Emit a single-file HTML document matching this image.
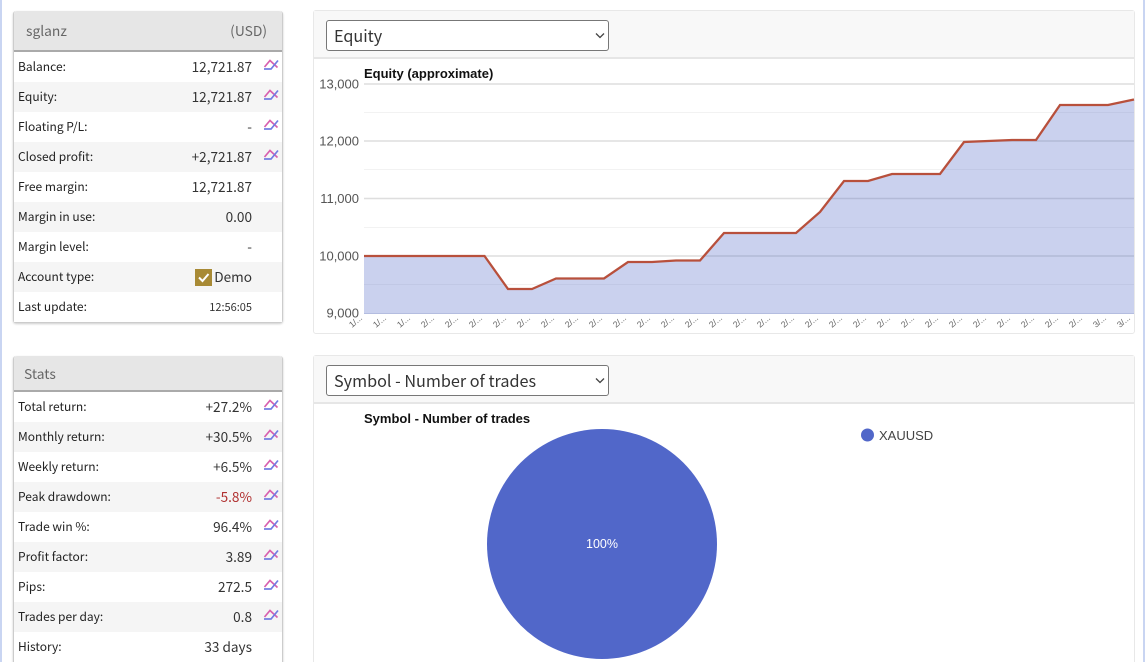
<!DOCTYPE html>
<html><head><meta charset="utf-8"><style>
*{box-sizing:border-box}
html,body{margin:0;padding:0;background:#fff;width:1146px;height:662px;overflow:hidden}
#w{position:absolute;left:0;top:0;width:1146px;height:662px;overflow:hidden;font-family:"Noto Sans CJK JP","Liberation Sans",sans-serif;color:#333;filter:blur(.3px)}
.abs{position:absolute}
.box{position:absolute;left:13px;width:270px;background:#fff;border:1px solid #ccc;border-top:0;border-radius:3px;box-shadow:0 1px 2px rgba(0,0,0,.2)}
.hd{height:41px;background:#e6e6e6;border-bottom:2px solid #aaa;border-radius:3px 3px 0 0;color:#666;font-size:13.8px;line-height:38px;padding:0 15px 0 12px;display:flex;justify-content:space-between}
.r{position:relative;height:30px;line-height:29px;font-size:12px;color:#222;padding-left:4px}
.r b{position:absolute;right:30px;top:0;font-weight:400;font-size:13.6px;color:#333}
.r svg{position:absolute;left:249px;top:6px}
.panel{position:absolute;left:313px;width:822px;border:1px solid #e8e8e8;background:#fff;border-radius:3px}
.ph{height:48px;background:#f8f8f8;border-bottom:2px solid #e6e6e6}
.sel{position:absolute;left:12px;top:9px;width:283px;height:31px;font-size:16.2px;line-height:28px;color:#333;background:#fff;border:1px solid #777;border-radius:3px;padding-left:7px}
.sel svg{position:absolute;right:3px;top:11px}
</style></head><body>
<div id="w">
<svg width="0" height="0" style="position:absolute"><defs><g id="ic" fill="none" stroke-width="1.700"><path d="M1.500 9L7 2.500L14.500 9.500" stroke="#d860ae"/><path d="M1 11H8L15 2.500" stroke="#727de2"/></g></defs></svg>
<div class="abs" style="left:0;top:0;width:2px;height:662px;background:#c9d5f2"></div>
<div class="abs" style="left:1143px;top:0;width:2px;height:662px;background:#c9d5f2"></div>

<div class="box" style="top:11px;height:312px">
<div class="hd"><span>sglanz</span><span>(USD)</span></div>
<div>
<div class="r" style="background:#fff">Balance:<b>12,721.87</b><svg width="17" height="14"><use href="#ic"/></svg></div>
<div class="r" style="background:#f5f5f5">Equity:<b>12,721.87</b><svg width="17" height="14"><use href="#ic"/></svg></div>
<div class="r" style="background:#fff">Floating P/L:<b>-</b><svg width="17" height="14"><use href="#ic"/></svg></div>
<div class="r" style="background:#f5f5f5">Closed profit:<b>+2,721.87</b><svg width="17" height="14"><use href="#ic"/></svg></div>
<div class="r" style="background:#fff">Free margin:<b>12,721.87</b></div>
<div class="r" style="background:#f5f5f5">Margin in use:<b>0.00</b></div>
<div class="r" style="background:#fff">Margin level:<b>-</b></div>
<div class="r" style="background:#f5f5f5">Account type:<b><span style="display:inline-block;width:17px;height:17px;background:#a88a35;vertical-align:-4px;margin-right:2px;position:relative"><svg width="17" height="17" style="left:0;top:0"><path d="M4 8.500L7.500 12L13.500 5" fill="none" stroke="#fff" stroke-width="2"/></svg></span>Demo</b></div>
<div class="r" style="background:#fff">Last update:<b style="font-size:11px;line-height:30px">12:56:05</b></div>
</div></div>

<div class="box" style="top:356px;height:320px">
<div class="hd" style="height:36px;line-height:34px;padding-left:10px"><span>Stats</span></div>
<div>
<div class="r" style="background:#fff">Total return:<b>+27.2%</b><svg width="17" height="14"><use href="#ic"/></svg></div>
<div class="r" style="background:#f5f5f5">Monthly return:<b>+30.5%</b><svg width="17" height="14"><use href="#ic"/></svg></div>
<div class="r" style="background:#fff">Weekly return:<b>+6.5%</b><svg width="17" height="14"><use href="#ic"/></svg></div>
<div class="r" style="background:#f5f5f5">Peak drawdown:<b style="color:#b03030">-5.8%</b><svg width="17" height="14"><use href="#ic"/></svg></div>
<div class="r" style="background:#fff">Trade win %:<b>96.4%</b><svg width="17" height="14"><use href="#ic"/></svg></div>
<div class="r" style="background:#f5f5f5">Profit factor:<b>3.89</b><svg width="17" height="14"><use href="#ic"/></svg></div>
<div class="r" style="background:#fff">Pips:<b>272.5</b><svg width="17" height="14"><use href="#ic"/></svg></div>
<div class="r" style="background:#f5f5f5">Trades per day:<b>0.8</b><svg width="17" height="14"><use href="#ic"/></svg></div>
<div class="r" style="background:#fff">History:<b>33 days</b></div>
</div></div>

<div class="panel" style="top:10px;height:324px"><div class="ph"><div class="sel">Equity<svg width="10" height="8"><path d="M1 1.500L5 5.500L9 1.500" fill="none" stroke="#444" stroke-width="1.300"/></svg></div></div></div>
<div class="panel" style="top:355px;height:320px"><div class="ph"><div class="sel">Symbol - Number of trades<svg width="10" height="8"><path d="M1 1.500L5 5.500L9 1.500" fill="none" stroke="#444" stroke-width="1.300"/></svg></div></div></div>

<svg class="abs" style="left:0;top:0" width="1146" height="662" font-family="Liberation Sans, Arial, sans-serif">
<g stroke="#f2f2f2" stroke-width="1"><path d="M364 112.500H1134M364 169.500H1134M364 227.500H1134M364 284.500H1134"/></g>
<g stroke="#dedede" stroke-width="1.500"><path d="M364 84H1134M364 141H1134M364 198.500H1134M364 256H1134"/></g>
<path d="M364 256H484.500L508 289H532L556 278.500H604L628 262H652L676 260.500H700L724 233H796L820 212L844 181H868L892 174H940L964 142L988 141L1012 140H1036L1060 105H1108L1134 99.500V313.500H364Z" fill="#5066c8" fill-opacity=".3"/>
<path d="M364 313.500H1134" stroke="#b4bde0" stroke-width="1"/>
<path d="M364 256H484.500L508 289H532L556 278.500H604L628 262H652L676 260.500H700L724 233H796L820 212L844 181H868L892 174H940L964 142L988 141L1012 140H1036L1060 105H1108L1134 99.500" fill="none" stroke="#b8503c" stroke-width="2.300"/>
<text x="364" y="78" font-size="13" font-weight="700" fill="#111">Equity (approximate)</text>
<g font-size="13" fill="#555" text-anchor="end"><text x="359" y="88.500">13,000</text><text x="359" y="145.500">12,000</text><text x="359" y="203">11,000</text><text x="359" y="260.500">10,000</text><text x="359" y="317.500">9,000</text></g>
<g font-size="8.500" fill="#666">
<text transform="translate(352,328) rotate(-40)">1/...</text><text transform="translate(376,328) rotate(-40)">1/...</text><text transform="translate(400,328) rotate(-40)">1/...</text><text transform="translate(424,328) rotate(-40)">2/...</text><text transform="translate(448,328) rotate(-40)">2/...</text><text transform="translate(472,328) rotate(-40)">2/...</text><text transform="translate(496,328) rotate(-40)">2/...</text><text transform="translate(520,328) rotate(-40)">2/...</text><text transform="translate(544,328) rotate(-40)">2/...</text><text transform="translate(568,328) rotate(-40)">2/...</text><text transform="translate(592,328) rotate(-40)">2/...</text><text transform="translate(616,328) rotate(-40)">2/...</text><text transform="translate(640,328) rotate(-40)">2/...</text><text transform="translate(664,328) rotate(-40)">2/...</text><text transform="translate(688,328) rotate(-40)">2/...</text><text transform="translate(712,328) rotate(-40)">2/...</text><text transform="translate(736,328) rotate(-40)">2/...</text><text transform="translate(760,328) rotate(-40)">2/...</text><text transform="translate(784,328) rotate(-40)">2/...</text><text transform="translate(808,328) rotate(-40)">2/...</text><text transform="translate(832,328) rotate(-40)">2/...</text><text transform="translate(856,328) rotate(-40)">2/...</text><text transform="translate(880,328) rotate(-40)">2/...</text><text transform="translate(904,328) rotate(-40)">2/...</text><text transform="translate(928,328) rotate(-40)">2/...</text><text transform="translate(952,328) rotate(-40)">2/...</text><text transform="translate(976,328) rotate(-40)">2/...</text><text transform="translate(1000,328) rotate(-40)">2/...</text><text transform="translate(1024,328) rotate(-40)">2/...</text><text transform="translate(1048,328) rotate(-40)">2/...</text><text transform="translate(1072,328) rotate(-40)">2/...</text><text transform="translate(1096,328) rotate(-40)">3/...</text><text transform="translate(1120,328) rotate(-40)">3/...</text>
</g>
<text x="364" y="423" font-size="13" font-weight="700" fill="#111">Symbol - Number of trades</text>
<circle cx="602" cy="544" r="115" fill="#5167c9"/>
<text x="602" y="548" font-size="12.500" fill="#fff" text-anchor="middle">100%</text>
<circle cx="867.500" cy="435" r="6.500" fill="#5167c9"/>
<text x="879" y="440" font-size="13" fill="#444">XAUUSD</text>
</svg>
</div>
</body></html>
